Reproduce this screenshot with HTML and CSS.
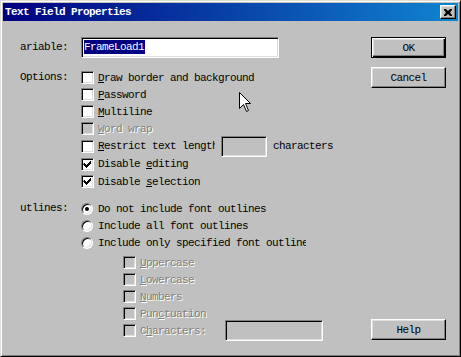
FILE: index.html
```html
<!DOCTYPE html>
<html>

<head>
    <title>Text Field Properties</title>
    <link rel="stylesheet" href="styles.css">
</head>

<body>
    <div class="window">
        <div class="titlebar">
            <span class="title">Text Field Properties</span>
            <button class="close" type="button">
                <svg width="8" height="7" viewBox="0 0 8 7"><path d="M0 0h2l2 2 2-2h2v1l-2 2.5 2 2.5v1h-2l-2-2-2 2h-2v-1l2-2.5-2-2.5z" fill="#000"/></svg>
            </button>
        </div>

        <div class="content">
            <div class="form">
                <div class="group var-group">
                    <div class="label">ariable:</div>
                    <div class="controls">
                        <div class="textbox wide"><span class="selected">FrameLoad1</span></div>
                    </div>
                </div>

                <div class="group options">
                    <div class="label">Options:</div>
                    <div class="controls">
                        <div class="row"><span class="check"></span><span><u>D</u>raw border and background</span></div>
                        <div class="row"><span class="check"></span><span><u>P</u>assword</span></div>
                        <div class="row"><span class="check"></span><span><u>M</u>ultiline</span></div>
                        <div class="row"><span class="check off"></span><span class="disabled"><u>W</u>ord wrap</span></div>
                        <div class="row tall">
                            <span class="check"></span>
                            <span class="clip"><u>R</u>estrict text length</span>
                            <span class="textbox grey short"></span>
                            <span>characters</span>
                        </div>
                        <div class="row tall"><span class="check checked"></span><span>Disable <u>e</u>diting</span></div>
                        <div class="row"><span class="check checked"></span><span>Disable <u>s</u>election</span></div>
                    </div>
                </div>

                <div class="group outlines">
                    <div class="label">utlines:</div>
                    <div class="controls">
                        <div class="row radio-row"><span class="radio on"></span><span>Do not include font outlines</span></div>
                        <div class="row radio-row"><span class="radio"></span><span>Include all font outlines</span></div>
                        <div class="row radio-row"><span class="radio"></span><span class="clip long">Include only specified font outlines</span></div>

                        <div class="sub">
                            <div class="row"><span class="check off"></span><span class="disabled"><u>U</u>ppercase</span></div>
                            <div class="row"><span class="check off"></span><span class="disabled"><u>L</u>owercase</span></div>
                            <div class="row"><span class="check off"></span><span class="disabled"><u>N</u>umbers</span></div>
                            <div class="row"><span class="check off"></span><span class="disabled">Pun<u>c</u>tuation</span></div>
                            <div class="row">
                                <span class="check off"></span>
                                <span class="disabled">C<u>h</u>aracters:</span>
                                <span class="textbox grey chars"></span>
                            </div>
                        </div>
                    </div>
                </div>
            </div>

            <div class="side">
                <button class="btn default" type="button">OK</button>
                <button class="btn" type="button">Cancel</button>
                <button class="btn help" type="button">Help</button>
            </div>
        </div>

        <svg class="cursor" width="13" height="21" viewBox="0 0 13 21">
            <path d="M0.5 0.5V16.5L4.5 12.5L7.5 19.5L9.5 18.5L6.5 11.5H11.5Z" fill="#fff" stroke="#000" stroke-width="1" stroke-linejoin="miter"/>
        </svg>
    </div>
</body>

</html>
```

FILE: styles.css
```css
body {
    margin: 0;
    background: #c0c0c0;
    font-family: "Liberation Mono", monospace;
    font-size: 11px;
    letter-spacing: -0.6px;
    color: #000;
}

.window {
    position: relative;
    width: 461px;
    height: 357px;
    box-sizing: border-box;
    padding: 2px;
    background: #c0c0c0;
    border: 1px solid;
    border-color: #dfdfdf #000 #000 #dfdfdf;
    box-shadow: inset 1px 1px #fff, inset -1px -1px #808080;
    display: flex;
    flex-direction: column;
}

.titlebar {
    height: 18px;
    flex: none;
    display: flex;
    align-items: center;
    justify-content: space-between;
    padding: 0 2px;
    background: linear-gradient(to right, #000080, #1084d0);
}

.title {
    color: #fff;
    font-weight: bold;
}

button {
    font: inherit;
    letter-spacing: inherit;
    color: #000;
    padding: 0;
    margin: 0;
}

.close {
    width: 16px;
    height: 14px;
    box-sizing: border-box;
    background: #c0c0c0;
    border: 1px solid;
    border-color: #fff #000 #000 #fff;
    box-shadow: inset -1px -1px #808080, inset 1px 1px #dfdfdf;
    display: flex;
    align-items: center;
    justify-content: center;
}

.content {
    flex: 1;
    display: flex;
    padding-bottom: 14px;
}

.form {
    flex: 1;
}

.group {
    display: grid;
    grid-template-columns: 65px 1fr;
    column-gap: 13px;
}

.label {
    text-align: right;
    line-height: 17px;
    white-space: nowrap;
    overflow: hidden;
}

.var-group {
    margin-top: 16px;
}

.var-group .label {
    align-self: center;
}

.options {
    margin-top: 11px;
}

.outlines {
    margin-top: 10px;
}

.row {
    display: flex;
    align-items: center;
    gap: 4px;
    height: 17px;
    white-space: nowrap;
}

.row.tall {
    height: 18px;
}

.radio-row {
    gap: 5px;
}

.check {
    flex: none;
    width: 13px;
    height: 13px;
    box-sizing: border-box;
    background: #fff;
    border: 1px solid;
    border-color: #808080 #fff #fff #808080;
    box-shadow: inset 1px 1px #000, inset -1px -1px #dfdfdf;
}

.check.off {
    background: #c0c0c0;
}

.check.checked {
    background: #fff url("data:image/svg+xml,%3Csvg xmlns='http://www.w3.org/2000/svg' width='11' height='11'%3E%3Cpath d='M2 4h1v1h1v1h1v-1h1v-1h1v-1h1v-1h1v3h-1v1h-1v1h-1v1h-1v1h-1v-1h-1v-1h-1v-1h-1z' fill='%23000'/%3E%3C/svg%3E") no-repeat 0 0;
}

.radio {
    flex: none;
    position: relative;
    width: 12px;
    height: 12px;
    box-sizing: border-box;
    border-radius: 50%;
    background: #fff;
    border: 1px solid;
    border-color: #808080 #fff #fff #808080;
    box-shadow: inset 1px 1px #000, inset -1px -1px #dfdfdf;
}

.radio.on::after {
    content: "";
    position: absolute;
    left: 3px;
    top: 3px;
    width: 4px;
    height: 4px;
    border-radius: 50%;
    background: #000;
}

.clip {
    width: 117px;
    overflow: hidden;
}

.clip.long {
    width: 208px;
}

.disabled {
    color: #808080;
    text-shadow: 1px 1px #fff;
}

.textbox {
    flex: none;
    display: block;
    height: 21px;
    box-sizing: border-box;
    background: #fff;
    border: 1px solid;
    border-color: #808080 #fff #fff #808080;
    box-shadow: inset 1px 1px #000, inset -1px -1px #dfdfdf;
    padding: 2px 0 0 2px;
}

.textbox.grey {
    background: #c0c0c0;
}

.textbox.wide {
    width: 198px;
}

.textbox.short {
    width: 46px;
    margin-left: 2px;
    margin-right: 2px;
}

.textbox.chars {
    width: 98px;
    margin-left: 15px;
}

.selected {
    display: inline-block;
    background: #000080;
    color: #fff;
    line-height: 14px;
    padding-right: 1px;
}

.sub {
    margin-top: 3px;
    margin-left: 42px;
}

.side {
    width: 75px;
    padding: 16px 12px 0 0;
    display: flex;
    flex-direction: column;
}

.btn {
    width: 75px;
    height: 21px;
    box-sizing: border-box;
    background: #c0c0c0;
    border: 1px solid;
    border-color: #fff #000 #000 #fff;
    box-shadow: inset -1px -1px #808080, inset 1px 1px #dfdfdf;
}

.btn + .btn {
    margin-top: 9px;
}

.btn.default {
    border-color: #000;
    box-shadow: inset 1px 1px #fff, inset -1px -1px #000, inset -2px -2px #808080, inset 2px 2px #dfdfdf;
}

.btn.help {
    margin-top: auto;
}

.cursor {
    position: absolute;
    left: 238px;
    top: 91px;
}
```
